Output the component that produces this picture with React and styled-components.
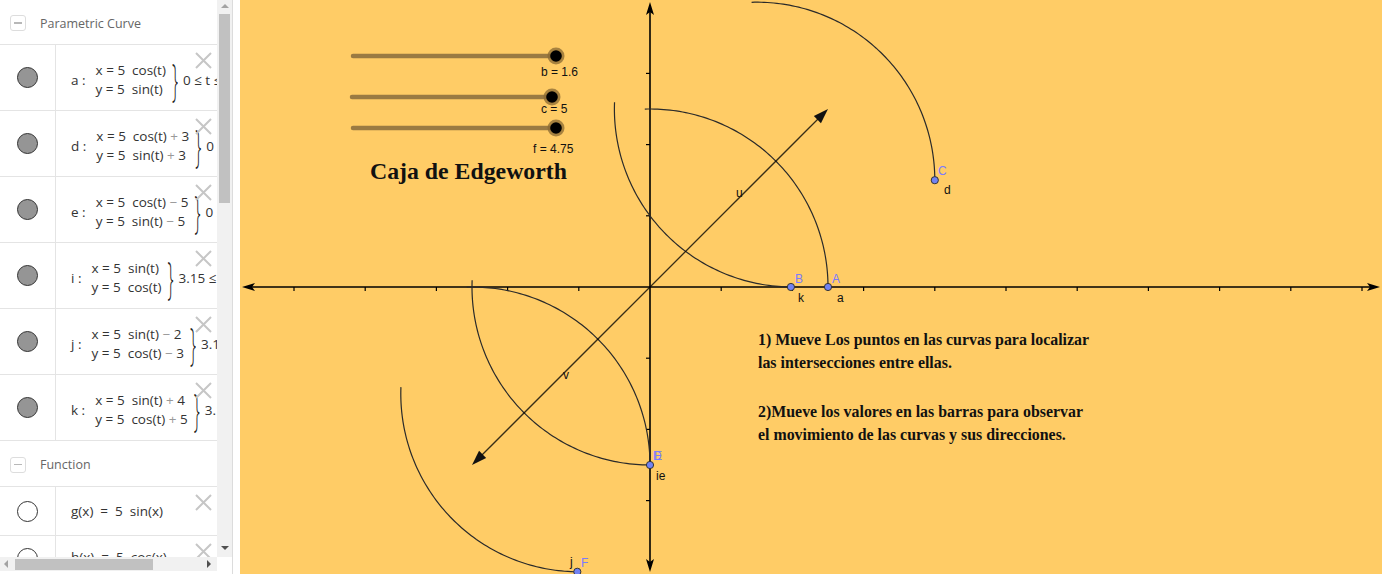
import styled, { createGlobalStyle } from 'styled-components';

const GlobalStyle = createGlobalStyle`
  html, body {
    margin: 0;
    padding: 0;
    background: #fff;
  }
  body {
    font-family: "Open Sans", "DejaVu Sans", sans-serif;
    overflow: hidden;
  }
`;

const Applet = styled.div`
  display: flex;
  width: 1382px;
  height: 574px;
  overflow: hidden;
`;

const AlgebraPanel = styled.div`
  flex: none;
  width: 232px;
  height: 574px;
  display: grid;
  grid-template-columns: 217px 15px;
  grid-template-rows: 557px 17px;
  background: #fff;
`;

const AlgebraContent = styled.div`
  overflow: hidden;
  position: relative;
`;

const SectionHeader = styled.div`
  height: ${p => p.h}px;
  box-sizing: border-box;
  display: flex;
  align-items: center;
  gap: 14px;
  padding-left: 10px;
  padding-top: 2px;
  border-bottom: 1px solid #e4e4e4;
  color: #666;
  font-size: 12.5px;
`;

const Toggle = styled.div`
  width: 14px;
  height: 14px;
  border: 1px solid #ddd;
  border-radius: 3px;
  display: flex;
  align-items: center;
  justify-content: center;

  &::after {
    content: '';
    width: 8px;
    height: 1.5px;
    background: #b8b8b8;
  }
`;

const Row = styled.div`
  position: relative;
  display: flex;
  height: ${p => p.h}px;
  box-sizing: border-box;
  border-bottom: 1px solid #e4e4e4;
`;

const MarbleCell = styled.div`
  flex: none;
  width: 56px;
  border-right: 1px solid #e4e4e4;
  display: flex;
  align-items: ${p => (p.top ? 'flex-start' : 'center')};
  padding-top: ${p => (p.top ? '12px' : '0')};
  justify-content: center;
  box-sizing: border-box;
`;

const Marble = styled.div`
  width: 19px;
  height: 19px;
  border-radius: 50%;
  border: 1.5px solid #333;
  background: ${p => (p.filled ? '#959595' : '#fff')};
`;

const FormulaCell = styled.div`
  flex: 1;
  min-width: 0;
  display: flex;
  align-items: ${p => (p.top ? 'flex-start' : 'center')};
  padding-top: ${p => (p.top ? 12 : p.pad || 0)}px;
  padding-left: 15px;
  gap: 10px;
  white-space: pre;
  overflow: hidden;
  font-size: 13.5px;
  color: #333;
`;

const Lines = styled.div`
  display: flex;
  flex-direction: column;
  line-height: 19px;
`;

const Op = styled.span`
  color: #999;
`;

const Brace = styled.span`
  display: inline-block;
  font-size: 17px;
  font-weight: 300;
  color: #222;
  transform: scale(1, 2.55);
  margin-left: -4px;
`;

const Range = styled.span`
  margin-left: -5px;
`;

const CloseButton = styled.svg`
  position: absolute;
  left: 195px;
  top: 7px;
  width: 17px;
  height: 17px;
`;

const VScroll = styled.div`
  background: #f1f1f1;
  display: flex;
  flex-direction: column;
  align-items: center;
  position: relative;
`;

const ArrowUp = styled.div`
  margin-top: 4px;
  width: 0;
  height: 0;
  border-left: 4px solid transparent;
  border-right: 4px solid transparent;
  border-bottom: 4px solid #a3a3a3;
`;

const ArrowDown = styled.div`
  position: absolute;
  top: 546px;
  width: 0;
  height: 0;
  border-left: 4px solid transparent;
  border-right: 4px solid transparent;
  border-top: 4px solid #505050;
`;

const VThumb = styled.div`
  margin-top: 6px;
  width: 11px;
  height: 189px;
  background: #c1c1c1;
`;

const HScroll = styled.div`
  height: 14px;
  background: #f1f1f1;
  display: flex;
  align-items: center;
  position: relative;
`;

const ArrowLeft = styled.div`
  position: absolute;
  left: 4px;
  width: 0;
  height: 0;
  border-top: 4px solid transparent;
  border-bottom: 4px solid transparent;
  border-right: 4px solid #a3a3a3;
`;

const ArrowRight = styled.div`
  position: absolute;
  left: 207px;
  width: 0;
  height: 0;
  border-top: 4px solid transparent;
  border-bottom: 4px solid transparent;
  border-left: 4px solid #505050;
`;

const HThumb = styled.div`
  margin-left: 15px;
  width: 138px;
  height: 11px;
  background: #c1c1c1;
`;

const Corner = styled.div`
  background: #fff;
`;

const Splitter = styled.div`
  flex: none;
  width: 7px;
  border-left: 1px solid #dcdcdc;
  background: #fff;
`;

const GraphicsView = styled.div`
  flex: 1;
  background: #ffcc66;
`;

const Canvas = styled.svg`
  display: block;
  width: 100%;
  height: 100%;
  font-family: "Liberation Sans", Arial, sans-serif;
`;

// --- algebra data ---
const curves = [
  { name: 'a :', x: ['5  cos(t)'], y: ['5  sin(t)'], range: '0 ≤ t ≤ 1.6' },
  { name: 'd :', x: ['5  cos(t) ', '+', ' 3'], y: ['5  sin(t) ', '+', ' 3'], range: '0 ≤ t ≤ 1.6' },
  { name: 'e :', x: ['5  cos(t) ', '−', ' 5'], y: ['5  sin(t) ', '−', ' 5'], range: '0 ≤ t ≤ 1.6' },
  { name: 'i :', x: ['5  sin(t)'], y: ['5  cos(t)'], range: '3.15 ≤ t ≤ 4.75' },
  { name: 'j :', x: ['5  sin(t) ', '−', ' 2'], y: ['5  cos(t) ', '−', ' 3'], range: '3.15 ≤ t ≤ 4.75' },
  { name: 'k :', x: ['5  sin(t) ', '+', ' 4'], y: ['5  cos(t) ', '+', ' 5'], range: '3.15 ≤ t ≤ 4.75' },
];

const Expr = ({ v, parts }) => (
  <span>
    {v} = {parts[0]}
    {parts[1] && <Op>{parts[1]}</Op>}
    {parts[2]}
  </span>
);

const Close = () => (
  <CloseButton viewBox="0 0 17 17">
    <path d="M1 1 L16 16 M16 1 L1 16" stroke="#c6c6c6" strokeWidth="2" fill="none" />
  </CloseButton>
);

// --- graphics helpers ---
const U = 35.6;
const OX = 650;
const OY = 287;
const px = x => OX + U * x;
const py = y => OY - U * y;

const curvePath = (f, t0, t1, n = 90) => {
  let d = '';
  for (let i = 0; i <= n; i++) {
    const t = t0 + ((t1 - t0) * i) / n;
    const [x, y] = f(t);
    d += (i ? 'L' : 'M') + px(x).toFixed(2) + ',' + py(y).toFixed(2);
  }
  return d;
};

const b = 1.6;
const f = 4.75;
const c = Math.cos;
const s = Math.sin;

const graphCurves = [
  curvePath(t => [5 * c(t), 5 * s(t)], 0, b),
  curvePath(t => [5 * c(t) + 3, 5 * s(t) + 3], 0, b),
  curvePath(t => [5 * c(t) - 5, 5 * s(t) - 5], 0, b),
  curvePath(t => [5 * s(t), 5 * c(t)], 3.15, f),
  curvePath(t => [5 * s(t) - 2, 5 * c(t) - 3], 3.15, f),
  curvePath(t => [5 * s(t) + 4, 5 * c(t) + 5], 3.15, f),
];

const xTicks = [];
for (let n = -5; n <= 10; n++) if (n !== 0) xTicks.push(OX + n * 71.2);
const yTicks = [];
for (let n = -3; n <= 3; n++) if (n !== 0) yTicks.push(OY - n * 71.2);

const points = [
  [5, 0],
  [5 * s(3.15) + 4, 5 * c(3.15) + 5],
  [8, 3],
  [0, -5],
  [5 * s(3.15) - 2, 5 * c(3.15) - 3],
];

const labels = [
  { t: 'A', x: 832, y: 283, blue: true },
  { t: 'B', x: 795, y: 283, blue: true },
  { t: 'C', x: 938, y: 175, blue: true },
  { t: 'D', x: 653, y: 460, blue: true },
  { t: 'E', x: 654, y: 460, blue: true },
  { t: 'F', x: 581, y: 567, blue: true },
  { t: 'a', x: 837, y: 302 },
  { t: 'k', x: 798, y: 302 },
  { t: 'd', x: 944, y: 194 },
  { t: 'ie', x: 656, y: 480 },
  { t: 'j', x: 570, y: 566 },
  { t: 'u', x: 736, y: 197 },
  { t: 'v', x: 563, y: 379 },
];

const sliders = [
  { x1: 353, x2: 556, y: 56, label: 'b = 1.6', lx: 541, ly: 76 },
  { x1: 352, x2: 552, y: 97, label: 'c = 5', lx: 541, ly: 113 },
  { x1: 353, x2: 556, y: 128, label: 'f = 4.75', lx: 533, ly: 153 },
];

const vectorHead = (x, y, dx, dy) => {
  const len = Math.hypot(dx, dy);
  const ux = dx / len;
  const uy = dy / len;
  const bx = x - ux * 15;
  const by = y - uy * 15;
  return `${x},${y} ${bx - uy * 5},${by + ux * 5} ${bx + uy * 5},${by - ux * 5}`;
};

const App = () => {
  return (
    <Applet>
      <GlobalStyle />
      <AlgebraPanel>
        <AlgebraContent>
          <SectionHeader h={45}>
            <Toggle />
            Parametric Curve
          </SectionHeader>
          {curves.map(cv => (
            <Row h={66} key={cv.name}>
              <MarbleCell>
                <Marble filled />
              </MarbleCell>
              <FormulaCell pad={4}>
                <span>{cv.name}</span>
                <Lines>
                  <Expr v="x" parts={cv.x} />
                  <Expr v="y" parts={cv.y} />
                </Lines>
                <Brace>{'}'}</Brace>
                <Range>{cv.range}</Range>
              </FormulaCell>
              <Close />
            </Row>
          ))}
          <SectionHeader h={46}>
            <Toggle />
            Function
          </SectionHeader>
          <Row h={49}>
            <MarbleCell>
              <Marble />
            </MarbleCell>
            <FormulaCell>
              <span>g(x)  =  5  sin(x)</span>
            </FormulaCell>
            <Close />
          </Row>
          <Row h={49}>
            <MarbleCell top>
              <Marble />
            </MarbleCell>
            <FormulaCell top>
              <span>h(x)  =  5  cos(x)</span>
            </FormulaCell>
            <Close />
          </Row>
        </AlgebraContent>
        <VScroll>
          <ArrowUp />
          <VThumb />
          <ArrowDown />
        </VScroll>
        <div>
          <HScroll>
            <ArrowLeft />
            <HThumb />
            <ArrowRight />
          </HScroll>
        </div>
        <Corner />
      </AlgebraPanel>
      <Splitter />
      <GraphicsView>
        <Canvas viewBox="240 0 1142 574" preserveAspectRatio="none">
          {/* axes */}
          <line x1="246" y1={OY} x2="1376" y2={OY} stroke="#000" strokeWidth="1.6" />
          <line x1={OX} y1="6" x2={OX} y2="568" stroke="#000" strokeWidth="1.6" />
          <polygon points={`1380,${OY} 1367,${OY - 4} 1370,${OY} 1367,${OY + 4}`} fill="#000" />
          <polygon points={`242,${OY} 255,${OY - 4} 252,${OY} 255,${OY + 4}`} fill="#000" />
          <polygon points={`${OX},2 ${OX - 4},15 ${OX},12 ${OX + 4},15`} fill="#000" />
          <polygon points={`${OX},572 ${OX - 4},559 ${OX},562 ${OX + 4},559`} fill="#000" />
          {xTicks.map(x => (
            <line key={x} x1={x} y1={OY} x2={x} y2={OY + 4} stroke="#000" strokeWidth="1.2" />
          ))}
          {yTicks.map(y => (
            <line key={y} x1={OX - 4} y1={y} x2={OX} y2={y} stroke="#000" strokeWidth="1.2" />
          ))}

          {/* curves */}
          {graphCurves.map((d, i) => (
            <path key={i} d={d} fill="none" stroke="#2a2a2a" strokeWidth="1.2" />
          ))}

          {/* vectors */}
          <line x1={OX} y1={OY} x2={px(5) - 8} y2={py(5) + 8} stroke="rgba(0,0,0,0.78)" strokeWidth="1.3" />
          <polygon points={vectorHead(px(5), py(5), 1, -1)} fill="#111" />
          <line x1={OX} y1={OY} x2={px(-5) + 8} y2={py(-5) - 8} stroke="rgba(0,0,0,0.78)" strokeWidth="1.3" />
          <polygon points={vectorHead(px(-5), py(-5), -1, 1)} fill="#111" />

          {/* points */}
          {points.map(([x, y], i) => (
            <circle key={i} cx={px(x)} cy={py(y)} r="3.6" fill="#7282f2" stroke="#333" strokeWidth="1" />
          ))}
          {labels.map((l, i) => (
            <text key={i} x={l.x} y={l.y} fontSize="12" fill={l.blue ? '#7b7bff' : '#111'}>
              {l.t}
            </text>
          ))}

          {/* sliders */}
          {sliders.map(sl => (
            <g key={sl.label}>
              <line x1={sl.x1} y1={sl.y} x2={sl.x2} y2={sl.y} stroke="#9a7a42" strokeWidth="4.5" strokeLinecap="round" />
              <circle cx={sl.x2} cy={sl.y} r="8.5" fill="#8a6a33" opacity="0.75" />
              <circle cx={sl.x2} cy={sl.y} r="5.8" fill="#000" />
              <text x={sl.lx} y={sl.ly} fontSize="12" fill="#111">
                {sl.label}
              </text>
            </g>
          ))}

          {/* texts */}
          <text x="370" y="179" fontFamily='"Liberation Serif", "Times New Roman", serif' fontWeight="bold" fontSize="23.8" fill="#111">
            Caja de Edgeworth
          </text>
          <g fontFamily='"Liberation Serif", "Times New Roman", serif' fontWeight="bold" fontSize="15.9" fill="#111">
            <text x="758" y="345">1) Mueve Los puntos en las curvas para localizar</text>
            <text x="758" y="368">las intersecciones entre ellas.</text>
            <text x="758" y="417">2)Mueve los valores en las barras para observar</text>
            <text x="758" y="440">el movimiento de las curvas y sus direcciones.</text>
          </g>
        </Canvas>
      </GraphicsView>
    </Applet>
  );
};

export default App;
